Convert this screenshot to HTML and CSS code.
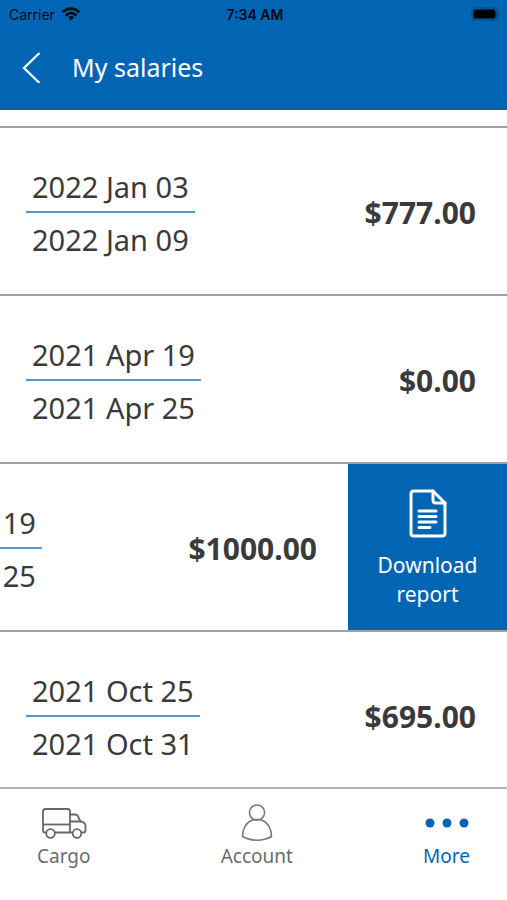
FILE: index.html
```html
<!DOCTYPE html>
<html lang="en">
<head>
<meta charset="utf-8">
<meta name="viewport" content="width=device-width, initial-scale=1">
<title>My salaries</title>
<link rel="stylesheet" href="styles.css">
</head>
<body>
<div class="app">
  <header class="header">
    <div class="status">
      <div class="carrier">
        <span>Carrier</span>
        <svg width="20" height="14" viewBox="0 0 20 14" fill="none" stroke="#000814" stroke-width="2.6" aria-hidden="true">
          <path d="M1.500 5.200Q10-1.800 18.500 5.200"/>
          <path d="M4.500 8.400Q10 4 15.500 8.400"/>
          <path d="M10 13.500L6.800 10.300Q10 7.800 13.200 10.300Z" fill="#000814" stroke="none"/>
        </svg>
      </div>
      <span class="clock">7:34 AM</span>
      <svg class="battery" width="30" height="14" viewBox="0 0 30 14" aria-hidden="true">
        <rect x="1" y="1" width="25" height="12" rx="4" fill="none" stroke="#05457c" stroke-width="1.2"/>
        <rect x="2.5" y="2.5" width="22" height="9" rx="2" fill="#000"/>
        <path d="M27.6 5.2Q29.2 7 27.6 8.8Z" fill="#05457c"/>
      </svg>
    </div>
    <div class="titlebar">
      <button class="back" type="button" aria-label="Back">
        <svg width="20" height="32" viewBox="0 0 20 32" fill="none" stroke="#fff" stroke-width="2.2" aria-hidden="true"><path d="M17.500 2L2 17L17.500 32"/></svg>
      </button>
      <h1 class="title">My salaries</h1>
    </div>
  </header>

  <main class="list">
    <section class="row">
      <div class="salary">
        <div class="period"><time class="from">2022 Jan 03</time><time class="to">2022 Jan 09</time></div>
        <strong class="amount">$777.00</strong>
      </div>
    </section>
    <section class="row">
      <div class="salary">
        <div class="period"><time class="from">2021 Apr 19</time><time class="to">2021 Apr 25</time></div>
        <strong class="amount">$0.00</strong>
      </div>
    </section>
    <section class="row swiped">
      <div class="salary">
        <div class="period"><time class="from">2021 Apr 19</time><time class="to">2021 Apr 25</time></div>
        <strong class="amount">$1000.00</strong>
      </div>
      <button class="download" type="button">
        <svg width="40" height="50" viewBox="0 0 40 50" fill="none" stroke="#fff" stroke-width="3" stroke-linejoin="round" stroke-linecap="round" aria-hidden="true">
          <path d="M5 2H25L37 14V44Q37 47 34 47H6Q3 47 3 44V5Q3 2 6 2Z"/>
          <path d="M25 2V11Q25 14 28 14H37"/>
          <path d="M11 22H28M11 27.500H28M11 33H28M11 38.500H22" stroke-width="3"/>
        </svg>
        <span>Download report</span>
      </button>
    </section>
    <section class="row">
      <div class="salary">
        <div class="period"><time class="from">2021 Oct 25</time><time class="to">2021 Oct 31</time></div>
        <strong class="amount">$695.00</strong>
      </div>
    </section>
  </main>

  <nav class="tabs">
    <a class="tab" href="#cargo">
      <svg width="46" height="38" viewBox="0 0 46 38" fill="none" stroke="#666" stroke-width="1.800" stroke-linejoin="round" aria-hidden="true">
        <path d="M5.500 29.500H4Q2 29.500 2 27.500V8.500Q2 6 4.500 6H26.500Q29 6 29 8.500V29.500H14"/>
        <path d="M2 21.500H29"/>
        <path d="M29 11.500H34.500Q36 11.500 36.800 13L39.500 18.500"/>
        <path d="M29 18.500H40Q44.500 19.500 44.500 23V27.500Q44.500 29.500 42.500 29.500H40.500M31.500 29.500H29"/>
        <circle cx="9.500" cy="30.500" r="4.300"/>
        <circle cx="36" cy="30.500" r="4.300"/>
      </svg>
      <span>Cargo</span>
    </a>
    <a class="tab" href="#account">
      <svg width="32" height="38" viewBox="0 0 32 38" fill="none" stroke="#777" stroke-width="1.500" aria-hidden="true">
        <circle cx="16" cy="9.500" r="7.600"/>
        <path d="M11 17.300C5 19.500 1.500 26 1.500 33.500Q8 37.200 16 37.200Q24 37.200 30.500 33.500C30.500 26 27 19.500 21 17.300Q16 15.800 11 17.300Z"/>
      </svg>
      <span>Account</span>
    </a>
    <a class="tab active" href="#more" aria-current="page">
      <svg width="46" height="38" viewBox="0 0 46 38" fill="#0265b3" aria-hidden="true">
        <circle cx="6" cy="20" r="4.500"/><circle cx="23" cy="20" r="4.500"/><circle cx="40" cy="20" r="4.500"/>
      </svg>
      <span>More</span>
    </a>
  </nav>
</div>
</body>
</html>
```
FILE: styles.css
```css
* { box-sizing: border-box; }

body {
  margin: 0;
  background: #fff;
  color: #3a3a3a;
  font-family: "Noto Sans", "Open Sans", sans-serif;
}

button {
  border: 0;
  padding: 0;
  background: none;
  color: inherit;
  font: inherit;
  cursor: pointer;
}

svg { display: block; flex: none; }

.app {
  display: flex;
  flex-direction: column;
  height: 100vh;
}

.header {
  flex: none;
  background: #0265b3;
}

.status {
  display: grid;
  grid-template-columns: 1fr auto 1fr;
  align-items: center;
  height: 28px;
  padding: 0 6px 0 9px;
  color: #000814;
  font-family: Inter, sans-serif;
  font-size: 14px;
}

.carrier {
  display: flex;
  align-items: center;
  gap: 6px;
}

.clock { font-weight: 600; }

.battery { justify-self: end; }

.titlebar {
  display: flex;
  align-items: center;
  gap: 30px;
  height: 82px;
  padding: 0 22px 4px;
}

.title {
  margin: 0;
  color: #fff;
  font-size: 25px;
  font-weight: 400;
}

.list {
  flex: 1;
  min-height: 0;
  overflow: hidden;
  padding-top: 16px;
}

.row {
  display: flex;
  height: 168px;
  border-top: 2px solid #a0a0a0;
  overflow: hidden;
}

.swiped { justify-content: flex-end; }

.salary {
  display: flex;
  flex: none;
  align-items: center;
  justify-content: space-between;
  width: 100%;
  padding: 4px 31px 0 26px;
}

.period {
  display: flex;
  flex-direction: column;
  font-size: 29px;
  line-height: 40px;
  white-space: nowrap;
}

.from {
  padding: 0 6px 4px;
  border-bottom: 2px solid #5598cf;
}

.to { padding: 7px 6px 0; }

.amount {
  font-size: 30px;
  line-height: 40px;
}

.download {
  display: flex;
  flex: none;
  flex-direction: column;
  align-items: center;
  gap: 12px;
  width: 159px;
  padding: 25px 24px 0;
  background: #0265b3;
  color: #fff;
  font-size: 21px;
  line-height: 29px;
}

.tabs {
  display: flex;
  flex: none;
  justify-content: space-between;
  height: 113px;
  padding: 14px 37px 0;
  border-top: 2px solid #b4b4b4;
  background: #fff;
}

.tab {
  display: flex;
  flex-direction: column;
  align-items: center;
  gap: 2px;
  color: #6c6c6c;
  font-size: 19px;
  line-height: 26px;
  text-decoration: none;
}

.active { color: #0265b3; }
```
